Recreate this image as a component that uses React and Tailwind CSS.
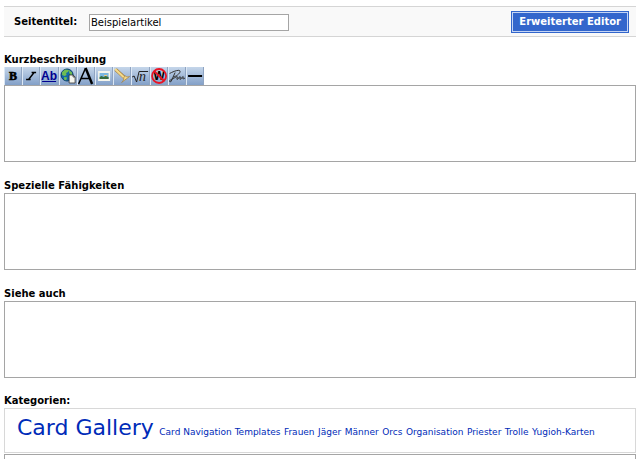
import { useState } from "react";

const categories = [
  { name: "Card Gallery", big: true },
  { name: "Card Navigation Templates" },
  { name: "Frauen" },
  { name: "Jäger" },
  { name: "Männer" },
  { name: "Orcs" },
  { name: "Organisation" },
  { name: "Priester" },
  { name: "Trolle" },
  { name: "Yugioh-Karten" },
];

const tools = [
  {
    title: "Fetter Text",
    icon: (
      <text x="9" y="13" textAnchor="middle" fontSize="12" fontWeight="bold" fontFamily="Liberation Serif, serif" stroke="#000" strokeWidth="0.6">
        B
      </text>
    ),
  },
  {
    title: "Kursiver Text",
    icon: <path d="M9.500 5.500h4.500M4 12.500h4.500M12 5.500L6.500 12.500" stroke="#000" strokeWidth="1.400" fill="none" />,
  },
  {
    title: "Interner Link",
    icon: (
      <>
        <text x="9" y="13" textAnchor="middle" fontSize="12" fontWeight="bold" fontFamily="Liberation Sans, sans-serif" fill="#000090">
          Ab
        </text>
        <path d="M2 14.500h14" stroke="#000090" />
      </>
    ),
  },
  {
    title: "Externer Link",
    icon: (
      <>
        <circle cx="8" cy="8" r="6" fill="#1268a8" stroke="#083c6c" />
        <path d="M3 5l3-2.500 4 .5-1 2-2 1 .5 2-2 1-2.500-1zM10 3l3 2.500v3l-2-1-1-2zM5 10l3 .5-1 3-2-1z" fill="#6fbd52" />
        <path d="M10 8h4l2 2v6h-6z" fill="#f5f5ee" stroke="#333" strokeWidth="0.8" />
        <path d="M14 8v2h2" stroke="#333" strokeWidth="0.8" fill="none" />
      </>
    ),
  },
  {
    title: "Überschrift",
    icon: (
      <>
        <path d="M1.500 17L8.500 1M4 11.500h9" stroke="#000" strokeWidth="1.500" fill="none" />
        <path d="M8.500 1L15 17" stroke="#000" strokeWidth="2.400" />
      </>
    ),
  },
  {
    title: "Bild",
    icon: (
      <>
        <path d="M3 4h12v10H3z" fill="#f4f4ec" />
        <path d="M4.500 6h9v6h-9z" fill="#7bb7df" />
        <path d="M4.500 10l2-1 2 1 2-1 3 1v2h-9z" fill="#356b3c" />
        <path d="M9 8h3v1H9z" fill="#f2c879" />
      </>
    ),
  },
  {
    title: "Mediendatei",
    icon: (
      <>
        <path d="M2.500 2.500L13 12" stroke="#a17a35" strokeWidth="3.400" />
        <path d="M2 2l10 9.500" stroke="#f3d98c" strokeWidth="2.400" />
        <path d="M8.500 15.500c2-2 2.500-3 2-5l2-1.500c1 1 2 1 4 .5z" fill="#f3d98c" stroke="#a17a35" strokeWidth="0.6" />
      </>
    ),
  },
  {
    title: "Mathematische Formel",
    icon: (
      <>
        <path d="M1 10l2-1 2.500 6L8 4.500h9" stroke="#222" fill="none" />
        <text x="8" y="14" fontSize="14" fontStyle="italic" fontFamily="Liberation Serif, serif" fill="#222">
          n
        </text>
      </>
    ),
  },
  {
    title: "Unformatierter Text",
    icon: (
      <>
        <text x="9" y="13" textAnchor="middle" fontSize="12" fontWeight="bold" fontFamily="Liberation Sans, sans-serif">
          W
        </text>
        <circle cx="9" cy="9" r="7" stroke="#e81525" strokeWidth="1.800" fill="none" />
        <path d="M4 4l10 10" stroke="#e81525" strokeWidth="1.800" />
      </>
    ),
  },
  {
    title: "Signatur",
    icon: (
      <path
        d="M1.500 6.500C6 4 12 2 12 4.500c0 2-4 5-7 5.500M7 5.500L3 14.500c-2 1-2-1 0-2 3-1 5-3 6-3s-1 3 0 3 2-3 3-3-1 3 0 3 2-3 3-3-1 2.500 0 2.500l2-1"
        stroke="#333"
        fill="none"
      />
    ),
  },
  { title: "Horizontale Linie", icon: <path d="M2 9h14" stroke="#000" strokeWidth="2" /> },
];

function Toolbar() {
  return (
    <div className="flex w-[200px]">
      {tools.map((tool) => (
        <button
          key={tool.title}
          type="button"
          title={tool.title}
          aria-label={tool.title}
          className="h-[18px] flex-1 cursor-pointer border-l border-l-[#dce8f5] border-r border-r-[#8fa4c2] bg-linear-to-b from-[#c5d6ea] to-[#83a0c8]"
        >
          <svg viewBox="1 0 16 18" className="block h-[18px] w-full">
            {tool.icon}
          </svg>
        </button>
      ))}
    </div>
  );
}

function Section({ id, label, toolbar }) {
  const [value, setValue] = useState("");

  return (
    <div className="mb-4">
      <label htmlFor={id} className="block font-bold">
        {label}
      </label>
      {toolbar && <Toolbar />}
      <textarea
        id={id}
        value={value}
        onChange={(e) => setValue(e.target.value)}
        className="block h-[77px] w-full resize-none border border-[#a5a5a5] bg-white p-1 outline-none"
      />
    </div>
  );
}

export default function App() {
  const [title, setTitle] = useState("Beispielartikel");
  const [summary, setSummary] = useState("");

  return (
    <form
      onSubmit={(e) => e.preventDefault()}
      className="h-screen overflow-hidden bg-white px-1 pt-1.5 font-['DejaVu_Sans',sans-serif] text-[10px] leading-[15px] text-black"
    >
      <div className="mb-[15px] flex items-center justify-between border-y border-[#d5d5d5] bg-[#f9f9f9] pt-1 pr-[7px] pb-[3px] pl-2.5">
        <div className="flex items-start">
          <label htmlFor="title" className="w-[75px] font-bold">
            Seitentitel:
          </label>
          <input
            id="title"
            type="text"
            value={title}
            onChange={(e) => setTitle(e.target.value)}
            className="h-[17px] w-[200px] border border-[#a5a5a5] bg-white px-px outline-none"
          />
        </div>
        <button
          type="button"
          className="cursor-pointer border border-[#3366cc] bg-[#3366cc] leading-[14px] font-bold text-white"
        >
          <span className="block border border-[#c5d5f5] px-1.5 py-0.5">Erweiterter Editor</span>
        </button>
      </div>

      <Section id="description" label="Kurzbeschreibung" toolbar />
      <Section id="abilities" label="Spezielle Fähigkeiten" />
      <Section id="see-also" label="Siehe auch" />

      <h2 className="leading-[14px] font-bold">Kategorien:</h2>
      <div className="mb-px border border-[#d8d8d8] px-3 pt-[3px] pb-2 text-[11px]">
        {categories.map((cat) => (
          <span key={cat.name}>
            <a
              href="#kategorie"
              className={cat.big ? "mr-0.5 text-[22px] leading-8 text-[#002bb8]" : "text-[9px] text-[#002bb8]"}
            >
              {cat.name}
            </a>{" "}
          </span>
        ))}
      </div>
      <textarea
        aria-label="Kategorien"
        value={summary}
        onChange={(e) => setSummary(e.target.value)}
        className="block h-12 w-full resize-none border border-[#a5a5a5] bg-white p-1 outline-none"
      />
    </form>
  );
}
